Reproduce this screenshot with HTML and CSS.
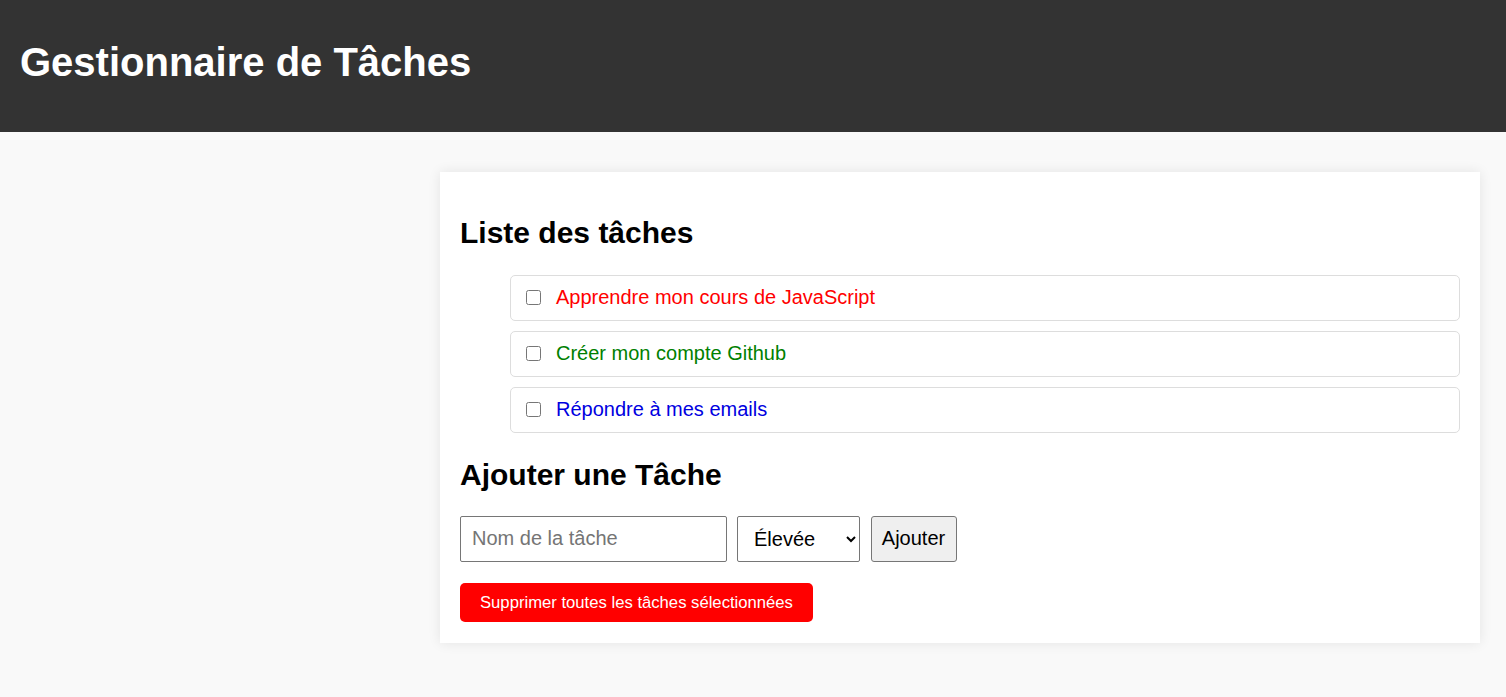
FILE: index.html
```html
<!DOCTYPE html>
<html lang="fr">
<head>
<meta charset="utf-8">
<title>Gestionnaire de Tâches</title>
<link rel="stylesheet" href="styles.css">
</head>
<body>
<header class="topbar">
  <h1 class="title">Gestionnaire de Tâches</h1>
</header>
<main class="page">
  <section class="card">
    <h2 class="section-title">Liste des tâches</h2>
    <ul class="task-list">
      <li class="task"><input type="checkbox" class="task-check"><span class="task-label high">Apprendre mon cours de JavaScript</span></li>
      <li class="task"><input type="checkbox" class="task-check"><span class="task-label low">Créer mon compte Github</span></li>
      <li class="task"><input type="checkbox" class="task-check"><span class="task-label mid">Répondre à mes emails</span></li>
    </ul>
    <h2 class="section-title form-title">Ajouter une Tâche</h2>
    <form class="add-form">
      <input type="text" class="field name-field" placeholder="Nom de la tâche">
      <select class="field priority-field">
        <option>Élevée</option>
        <option>Moyenne</option>
        <option>Basse</option>
      </select>
      <button type="button" class="add-btn">Ajouter</button>
    </form>
    <button type="button" class="delete-btn">Supprimer toutes les tâches sélectionnées</button>
  </section>
</main>
</body>
</html>
```
FILE: styles.css
```css
html, body {
  margin: 0;
  padding: 0;
}
body {
  background: #f9f9f9;
  font-family: "Liberation Sans", Arial, sans-serif;
  color: #000;
}
.topbar {
  background: #333333;
  color: #fff;
  height: 132px;
  box-sizing: border-box;
  padding: 39px 20px 0;
}
.title {
  margin: 0;
  font-size: 40px;
  line-height: 46px;
  font-weight: bold;
}
.page {
  display: flex;
  padding: 40px 26px 40px;
}
.card {
  margin-left: auto;
  width: 1000px;
  background: #fff;
  padding: 19px 20px 21px;
  box-shadow: 0 0 12px rgba(0, 0, 0, 0.09);
}
.section-title {
  font-size: 30px;
  line-height: 34.5px;
  font-weight: bold;
  margin: 25px 0 24.5px;
}
.form-title {
  margin-bottom: 23.5px;
}
.task-list {
  list-style: none;
  margin: 0;
  padding: 0 0 0 50px;
}
.task {
  display: flex;
  align-items: center;
  height: 45.5px;
  box-sizing: border-box;
  border: 1px solid #dddddd;
  border-radius: 5px;
  padding: 0 15px;
  margin-bottom: 10.5px;
  font-size: 20px;
}
.task:last-child {
  margin-bottom: 0;
}
.task-check {
  width: 15px;
  height: 15px;
  margin: 0 15px 0 0;
}
.high { color: #ff0000; }
.low { color: #008000; }
.mid { color: #0000e0; }
.add-form {
  display: flex;
  align-items: flex-start;
  gap: 10px;
  margin: 0 0 21px;
}
.field {
  height: 46.5px;
  box-sizing: border-box;
  border: 1px solid #767676;
  border-radius: 2px;
  font-family: "Liberation Sans", Arial, sans-serif;
  font-size: 20px;
  background: #fff;
  color: #000;
}
.name-field {
  width: 267px;
  padding: 0 11px;
}
.name-field::placeholder {
  color: #757575;
}
.priority-field {
  width: 122.5px;
  padding: 0 6px 0 12px;
}
.add-btn {
  height: 46.5px;
  width: 86px;
  margin-left: 1px;
  box-sizing: border-box;
  border: 1px solid #767676;
  border-radius: 3px;
  background: #efefef;
  font-family: "Liberation Sans", Arial, sans-serif;
  font-size: 20px;
  color: #000;
  padding: 0 10px;
}
.delete-btn {
  display: block;
  background: #ff0000;
  color: #fff;
  border: none;
  border-radius: 5px;
  font-family: "Liberation Sans", Arial, sans-serif;
  font-size: 16.67px;
  line-height: 19.4px;
  padding: 10px 20px;
}
```
